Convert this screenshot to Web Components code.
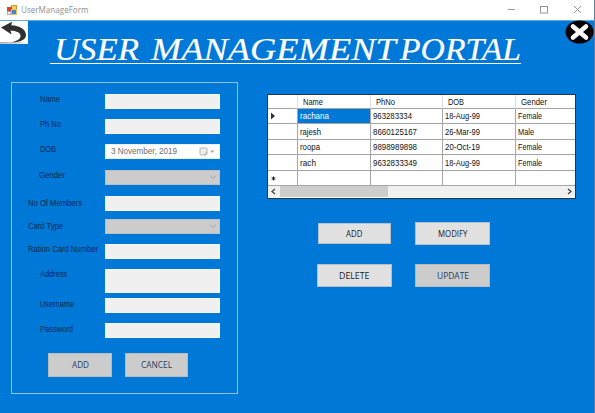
<!DOCTYPE html>
<html lang="en"><head><meta charset="utf-8"><title>UserManageForm</title>
<style>
html,body{margin:0;width:595px;height:413px;overflow:hidden;background:#0078d7;font-family:"Liberation Sans",Arial,sans-serif}
</style></head><body>
<user-window></user-window>
<script>
const define=(name,render)=>customElements.define(name,class extends HTMLElement{
  connectedCallback(){if(!this.shadowRoot)this.attachShadow({mode:'open'}).innerHTML=render(this)}
});
const a=(e,n,d='')=>e.getAttribute(n)??d;

/* One line of text set to an exact width */
define('fit-text',e=>{
  const w=a(e,'w'),s=+a(e,'size','8.5'),h=+a(e,'h','12');
  return `<style>:host{display:block;width:${w}px;height:${h}px;flex:none}svg{display:block;overflow:visible}text{fill:currentColor;font-family:inherit;font-style:inherit}</style>
  <svg width="${w}" height="${h}"><text x="0" y="${h/2+s*.36}" font-size="${s}" textLength="${w}" lengthAdjust="spacingAndGlyphs">${a(e,'text')}</text></svg>`});

define('title-bar',()=>`<style>
:host{display:flex;align-items:center;height:20px;background:#fff;color:#929292;padding:0 12px 0 7px;box-sizing:border-box;font-family:"Open Sans",sans-serif}
fit-text{margin:-1px auto 0 3px}svg{display:block}.win{margin:-2px 0 0}
</style>
<svg width="11" height="11"><rect x="4.5" y=".5" width="5" height="5" fill="#f6cf4c" stroke="#c79b27"/><rect x=".5" y="2.500" width="4" height="4" fill="#e23b2a" stroke="#b4412f" stroke-width=".8"/><rect x="4.5" y="4.500" width="5" height="5" fill="#4e80d8" stroke="#e8c25a"/><rect x=".5" y="6.500" width="3.500" height="3" fill="#eee" stroke="#999" stroke-width=".8"/></svg>
<fit-text w="67.500" size="8.8" text="UserManageForm"></fit-text>
<svg class="win" width="74" height="9" fill="none" stroke="#999"><path d="M0 4.500h7"/><rect x="32.500" y="1.500" width="7" height="6.500"/><path d="M66 1l7 7M73 1l-7 7"/></svg>`);

define('back-button',()=>`<style>:host{display:block;width:28px;height:23px;background:#fff;flex:none}svg{display:block}</style>
<svg width="28" height="23"><defs><linearGradient id="g" x2="1"><stop stop-color="#888"/><stop offset=".7" stop-color="#bbb"/><stop offset="1" stop-color="#fff"/></linearGradient></defs><rect y="21.300" width="27" height="1.200" fill="url(#g)"/><path d="M1 6.500L12 0.800L11.300 4.200C20 4.500 25.800 8.500 26 14C26 18.500 21 21.300 11.500 21.300C18 19.800 21 17.300 20.500 14.500C20 11.200 15.500 9.700 10.500 9.800L11.600 13.600Z" fill="#303030"/></svg>`);

define('close-badge',()=>`<style>:host{display:block;flex:none;width:29px;height:24px}svg{display:block}</style>
<svg width="29" height="24"><ellipse cx="14.500" cy="12" rx="14" ry="11.500" fill="#000"/><path d="M8 6.500L21 17.500M21 6.500L8 17.500" stroke="#fff" stroke-width="4.600" stroke-linecap="round"/></svg>`);

define('page-title',()=>`<style>:host{display:block;width:471px;height:43px;box-sizing:border-box;color:#fff;border-bottom:1.500px solid #fff}
svg{display:block;overflow:visible}text{fill:#fff;stroke:#fff;stroke-width:.2px;font:italic 31px "Monotype Corsiva","Z003","URW Chancery L","Liberation Serif",serif}</style>
<svg width="471" height="42"><text y="39.200" xml:space="preserve"><tspan x="4" textLength="85" lengthAdjust="spacingAndGlyphs">USER</tspan> <tspan x="101" textLength="244" lengthAdjust="spacingAndGlyphs">MANAGEMENT</tspan> <tspan x="350" textLength="121" lengthAdjust="spacingAndGlyphs">PORTAL</tspan></text></svg>`);

define('field-box',e=>{const k=a(e,'kind');return `<style>
:host{display:flex;align-items:center;box-sizing:border-box;width:115px;height:100%;background:${k=='combo'?'#ccc':k=='date'?'#fff':'#f0f0f0'};border:1px solid ${k=='combo'?'#bfbfbf':k=='date'?'#e8f1f9':'#f4f8fb'};color:#6d6d6d;padding:0 4px 0 5px;justify-content:space-between}
.c{margin-left:auto}</style>
${k=='date'?`<fit-text w="66" size="8.500" text="3 November, 2019"></fit-text><svg width="16" height="9"><rect x="1" y="1" width="7" height="7" rx="1" fill="#eee" stroke="#b5b5b5"/><path d="M5 8l3-3" stroke="#aaa"/><path d="M11 3.500h4.500l-2.250 2.500z" fill="#aaa"/></svg>`:''}
${k=='combo'?`<svg class="c" width="8" height="6" style="margin-right:-2px"><path d="M1 1.500l3 3l3-3" fill="none" stroke="#a0a0a0"/></svg>`:''}`});

define('form-row',e=>`<style>
:host{display:grid;grid-template-columns:93px 115px;height:${a(e,'h','15')}px;margin-top:${a(e,'gap')}px;color:#06284f}
.l{padding-left:${+a(e,'x')-12}px;margin-top:${+a(e,'cy','5.5')-6}px}</style>
<div class="l"><fit-text w="${a(e,'w')}" text="${a(e,'label')}" size="8.600"></fit-text></div><field-box kind="${a(e,'kind')}"></field-box>`);

define('push-button',e=>{const off=e.hasAttribute('off');return `<style>
:host{display:flex;align-items:center;justify-content:center;box-sizing:border-box;width:${a(e,'bw')}px;height:${a(e,'bh')}px;background:${off?'#ccc':'#e1e1e1'};border:1px solid ${off?'#bababa':'#b5bfc9'};color:${off?'#26405f':'#1a1a1a'};font-family:"Open Sans",sans-serif}</style>
<fit-text w="${a(e,'w')}" text="${a(e,'label')}" size="8.600"></fit-text>`});

define('user-form',()=>`<style>
:host{display:block;box-sizing:border-box;width:227px;height:312px;border:1px solid #8fc4ef;padding-top:10.500px}
.b{display:flex;gap:13px;margin:15px 0 0 36px}</style>
<form-row x="40" w="20" label="Name" gap="0"></form-row>
<form-row x="40" w="21" label="Ph No" gap="10"></form-row>
<form-row x="40" w="16" label="DOB" gap="10" kind="date"></form-row>
<form-row x="39" w="26" label="Gender" gap="11" kind="combo"></form-row>
<form-row x="28" w="54" label="No Of Members" gap="11" cy="7.500"></form-row>
<form-row x="28" w="35" label="Card Type" gap="8" cy="7" kind="combo"></form-row>
<form-row x="28" w="70" label="Ration Card Number" gap="10"></form-row>
<form-row x="40" w="27" label="Address" gap="10" h="24.500"></form-row>
<form-row x="40" w="34" label="Username" gap="5"></form-row>
<form-row x="40" w="33" label="Password" gap="10"></form-row>
<div class="b"><push-button off bw="64" bh="24" w="17" label="ADD"></push-button><push-button off bw="63" bh="24" w="31" label="CANCEL"></push-button></div>`);

define('grid-row',e=>{const c=a(e,'cells').split('|'),w=a(e,'widths').split(','),head=e.hasAttribute('head'),m=a(e,'mark');
return `<style>
:host{display:grid;grid-template-columns:29.500px 73px 72px 73px 1fr;height:${a(e,'h')}px;box-sizing:border-box;color:#111}
div{box-sizing:border-box;border-bottom:1px solid #a6a6a6;border-right:1px solid ${head?'#ddd':'#a6a6a6'};display:flex;align-items:center;padding-left:${head?5:2}px;overflow:hidden}
div:first-child{padding-left:5px;border-right-color:${head?'#ddd':'#a6a6a6'};border-bottom-color:${head?'#a6a6a6':'#ddd'}}div:last-child{border-right:0}
.s{background:#0078d7;color:#fff}svg{display:block}</style>
<div>${m=='arrow'?'<svg width="6" height="8"><path d="M1 .5l4 3.500l-4 3.500z" fill="#333"/></svg>':m=='new'?'<svg width="7" height="7" stroke="#222" stroke-width="1"><path d="M3.500 1.500v4M1.700 2.500l3.600 2M5.300 2.500l-3.600 2"/></svg>':''}</div>
${[0,1,2,3].map(i=>`<div class="${i==0&&m=='arrow'?'s':''}">${c[i]?`<fit-text w="${w[i]}" text="${c[i]}" size="8.500"></fit-text>`:''}</div>`).join('')}`});

define('scroll-bar',()=>`<style>:host{display:flex;align-items:center;justify-content:space-between;height:11px;background:#f0f0f0;padding:0 3px}
i{display:block;width:108px;height:11px;background:#cdcdcd;margin:0 auto 0 4px}svg{display:block}</style>
<svg width="5" height="7"><path d="M4 1l-3 2.500l3 2.500" fill="none" stroke="#444" stroke-width="1.300"/></svg><i></i><svg width="5" height="7"><path d="M1 1l3 2.500l-3 2.500" fill="none" stroke="#444" stroke-width="1.300"/></svg>`);

define('user-grid',()=>`<style>:host{display:block;box-sizing:border-box;width:309px;height:105px;border:1px solid #20344a;background:#fff}</style>
<grid-row head h="14" cells="Name|PhNo|DOB|Gender" widths="20,19,16,26"></grid-row>
<grid-row h="15" mark="arrow" cells="rachana|963283334|18-Aug-99|Female" widths="29,39,35,24"></grid-row>
<grid-row h="16" cells="rajesh|8660125167|26-Mar-99|Male" widths="21,44,35,16"></grid-row>
<grid-row h="15" cells="roopa|9898989898|20-Oct-19|Female" widths="20,44,35,24"></grid-row>
<grid-row h="16" cells="rach|9632833349|18-Aug-99|Female" widths="16,44,35,24"></grid-row>
<grid-row h="15" mark="new" cells="|||" widths="0,0,0,0"></grid-row>
<scroll-bar></scroll-bar>`);

define('user-window',()=>`<style>
:host{display:flex;flex-direction:column;width:595px;height:413px;background:#0078d7;border-right:1px solid #5b7fa6;box-sizing:border-box}
header{display:flex;height:61px;border-top:1px solid #5aabe9;box-sizing:border-box}
page-title{margin-left:21.500px}close-badge{margin:-1px 0 0 auto}
main{display:flex;gap:29px;padding:1px 0 0 11px}
.r{padding-top:12px}.a{display:grid;grid-template-columns:75px 75px;column-gap:23px;row-gap:19px;margin:23px 0 0 50px;justify-items:center;align-items:center}
</style>
<title-bar></title-bar>
<header><back-button></back-button><page-title></page-title><close-badge></close-badge></header>
<main><user-form></user-form><div class="r"><user-grid></user-grid><div class="a">
<push-button bw="73" bh="21" w="16.500" label="ADD"></push-button><push-button bw="75" bh="23" w="29.500" label="MODIFY"></push-button>
<push-button bw="75" bh="23" w="30.500" label="DELETE"></push-button><push-button off bw="75" bh="23" w="32" label="UPDATE"></push-button></div></div></main>`);
</script></body></html>
